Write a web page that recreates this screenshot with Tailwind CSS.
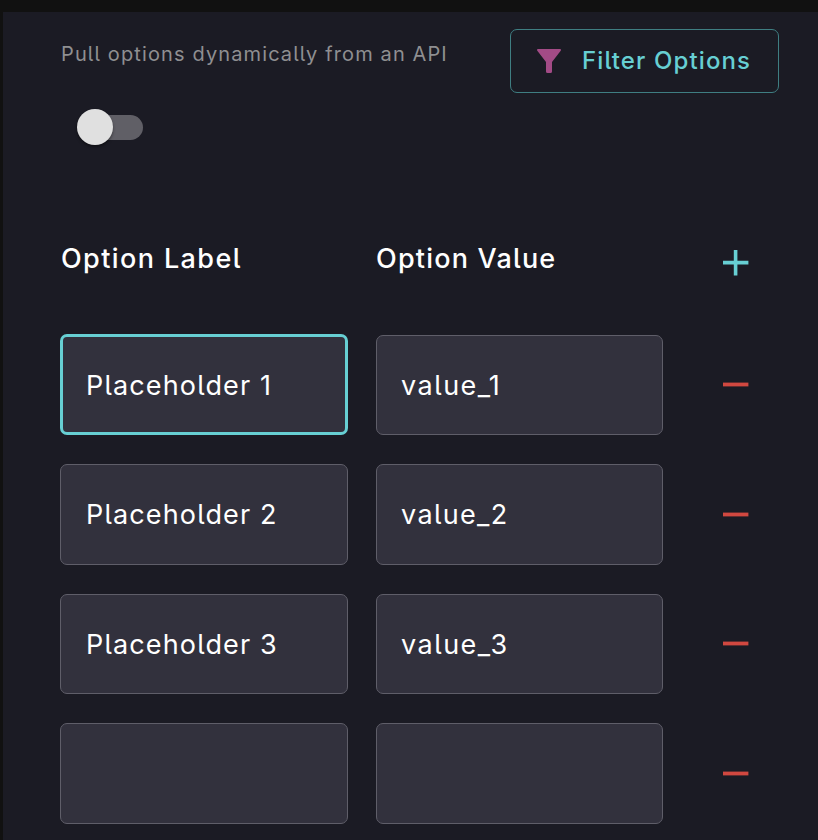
<!DOCTYPE html>
<html lang="en">
<head>
<meta charset="utf-8">
<title>Options</title>
<script src="https://cdn.jsdelivr.net/npm/@tailwindcss/browser@4"></script>
</head>
<body class="bg-[#111111] font-['Inter','Noto_Sans',sans-serif] text-white">
<main class="mt-3 ml-[3px] h-[828px] overflow-hidden bg-[#1b1b24] pl-[57px] pr-[39px] pt-[17px] whitespace-nowrap [font-feature-settings:'cv05']">
  <header class="flex h-[64px] items-start justify-between">
    <p class="mt-[11px] ml-px text-[20px] leading-7 tracking-[1.12px] text-[#8f8f91]">Pull options dynamically from an API</p>
    <button class="flex h-16 w-[269px] items-center rounded-[7px] border border-[#3f7e82] pl-[26px] text-[24px] font-medium tracking-[1.12px] text-[#67cfd3]">
      <svg class="mr-[21px] h-6 w-6 shrink-0" viewBox="0 0 24 24" fill="#a34b86"><path d="M1.2 0H22.8Q24.8 0 23.5 2L15 13V22.5Q15 24 13.5 24H10.5Q9 24 9 22.5V13L.5 2Q-.8 0 1.2 0Z"/></svg>
      <span>Filter Options</span>
    </button>
  </header>
  <div class="mt-4 ml-[17px] flex h-9 w-[66px] items-center" role="switch" aria-checked="false">
    <span class="z-10 h-9 w-9 shrink-0 rounded-full bg-[#e0e0e0] shadow-[0_2px_3px_rgba(0,0,0,0.4)]"></span>
    <span class="-ml-7 mt-px h-[25px] w-[58px] shrink-0 rounded-full bg-[#605f66]"></span>
  </div>
  <div class="mt-[94px] grid h-[95px] grid-cols-[288px_287px_90px] gap-x-7 text-[27px] leading-[40px] font-medium">
    <h2 class="ml-px tracking-[1.4px]">Option Label</h2>
    <h2 class="tracking-[1.2px]">Option Value</h2>
    <svg class="ml-8 mt-[11px] h-[26px] w-[26px]" viewBox="0 0 26 26" stroke="#67cfd3" stroke-width="3.6"><path d="M0 12.6H25.4M12.6 0V25.4"/></svg>
  </div>
  <div class="grid grid-cols-[288px_287px_90px] grid-rows-[101px_101px_100px_101px] gap-x-7 gap-y-[29px] text-[27px] tracking-[1.15px]">
    <div class="flex items-center rounded-[7px] border-3 border-[#67cfd3] bg-[#32313d] pl-[23px] pt-[3px]">Placeholder 1</div>
    <div class="mt-px flex items-center rounded-[7px] border border-[#5f5e69] bg-[#32313d] pl-6 pt-0.5 tracking-[1.5px]">value_1</div>
    <svg class="ml-8 mt-12 h-[5px] w-[26px]" viewBox="0 0 26 5"><path d="M0 .6H25.4V4.4H0Z" fill="#d14840"/></svg>
    <div class="flex items-center rounded-[7px] border border-[#5f5e69] bg-[#32313d] pl-[25px] pt-0.5">Placeholder 2</div>
    <div class="flex items-center rounded-[7px] border border-[#5f5e69] bg-[#32313d] pl-6 pt-0.5 tracking-[1.35px]">value_2</div>
    <svg class="ml-8 mt-12 h-[5px] w-[26px]" viewBox="0 0 26 5"><path d="M0 .6H25.4V4.4H0Z" fill="#d14840"/></svg>
    <div class="flex items-center rounded-[7px] border border-[#5f5e69] bg-[#32313d] pl-[25px] pt-0.5">Placeholder 3</div>
    <div class="flex items-center rounded-[7px] border border-[#5f5e69] bg-[#32313d] pl-6 pt-0.5 tracking-[1.5px]">value_3</div>
    <svg class="ml-8 mt-[47px] h-[5px] w-[26px]" viewBox="0 0 26 5"><path d="M0 .6H25.4V4.4H0Z" fill="#d14840"/></svg>
    <div class="rounded-[7px] border border-[#5f5e69] bg-[#32313d]"></div>
    <div class="rounded-[7px] border border-[#5f5e69] bg-[#32313d]"></div>
    <svg class="ml-8 mt-12 h-[5px] w-[26px]" viewBox="0 0 26 5"><path d="M0 .6H25.4V4.4H0Z" fill="#d14840"/></svg>
  </div>
</main>
</body>
</html>
